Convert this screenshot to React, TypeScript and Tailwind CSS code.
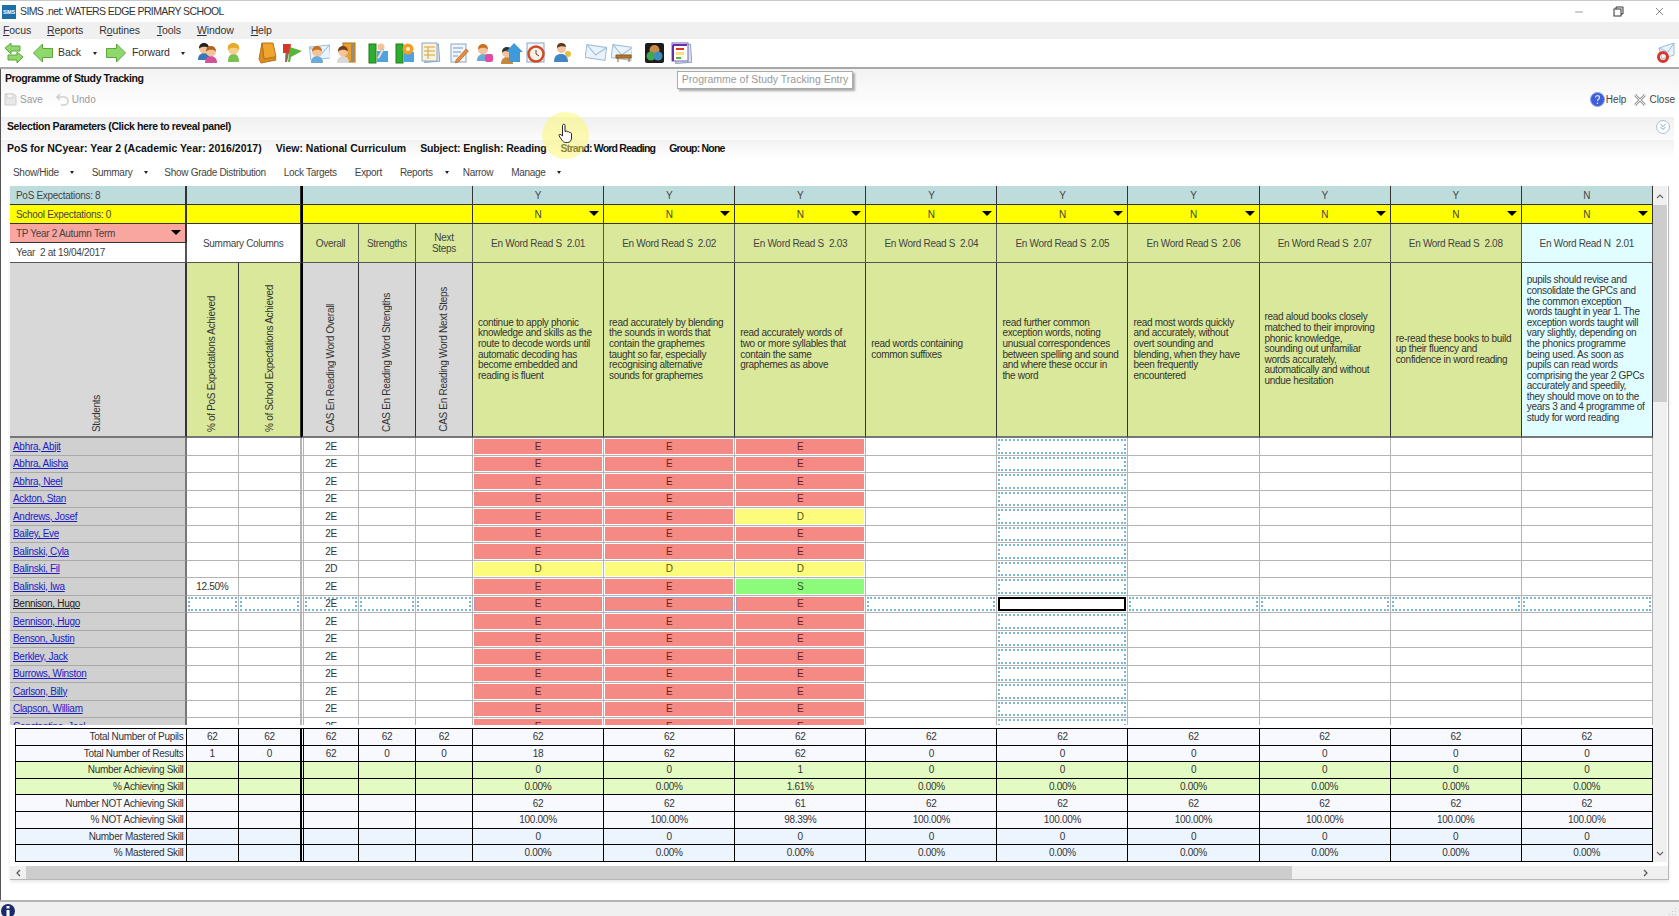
import { ChevronsDown, Minus, X } from 'lucide-react';

const gridCols = 'grid grid-cols-[176.5px_52.5px_62px_58px_57px_57px_repeat(9,131.1px)]';
const totalCols = 'grid grid-cols-[171.5px_52.5px_62px_58px_57px_57px_repeat(9,131.1px)]';

const skills = [
  { code: 'En Word Read S  2.01', pos: 'Y', text: 'continue to apply phonic\nknowledge and skills as the\nroute to decode words until\nautomatic decoding has\nbecome embedded and\nreading is fluent' },
  { code: 'En Word Read S  2.02', pos: 'Y', text: 'read accurately by blending\nthe sounds in words that\ncontain the graphemes\ntaught so far, especially\nrecognising alternative\nsounds for graphemes' },
  { code: 'En Word Read S  2.03', pos: 'Y', text: 'read accurately words of\ntwo or more syllables that\ncontain the same\ngraphemes as above' },
  { code: 'En Word Read S  2.04', pos: 'Y', text: 'read words containing\ncommon suffixes' },
  { code: 'En Word Read S  2.05', pos: 'Y', text: 'read further common\nexception words, noting\nunusual correspondences\nbetween spelling and sound\nand where these occur in\nthe word' },
  { code: 'En Word Read S  2.06', pos: 'Y', text: 'read most words quickly\nand accurately, without\novert sounding and\nblending, when they have\nbeen frequently\nencountered' },
  { code: 'En Word Read S  2.07', pos: 'Y', text: 'read aloud books closely\nmatched to their improving\nphonic knowledge,\nsounding out unfamiliar\nwords accurately,\nautomatically and without\nundue hesitation' },
  { code: 'En Word Read S  2.08', pos: 'Y', text: 're-read these books to build\nup their fluency and\nconfidence in word reading' },
  { code: 'En Word Read N  2.01', pos: 'N', text: 'pupils should revise and\nconsolidate the GPCs and\nthe common exception\nwords taught in year 1. The\nexception words taught will\nvary slightly, depending on\nthe phonics programme\nbeing used. As soon as\npupils can read words\ncomprising the year 2 GPCs\naccurately and speedily,\nthey should move on to the\nyears 3 and 4 programme of\nstudy for word reading' },
];

const students = [
  { name: 'Abhra, Abjit', grades: ['E', 'E', 'E'] },
  { name: 'Abhra, Alisha', grades: ['E', 'E', 'E'] },
  { name: 'Abhra, Neel', grades: ['E', 'E', 'E'] },
  { name: 'Ackton, Stan', grades: ['E', 'E', 'E'] },
  { name: 'Andrews, Josef', grades: ['E', 'E', 'D'] },
  { name: 'Bailey, Eve', grades: ['E', 'E', 'E'] },
  { name: 'Balinski, Cyla', grades: ['E', 'E', 'E'] },
  { name: 'Balinski, Fil', grades: ['D', 'D', 'D'], overall: '2D' },
  { name: 'Balinski, Iwa', grades: ['E', 'E', 'S'], pct: '12.50%' },
  { name: 'Bennison, Hugo', grades: ['E', 'E', 'E'], selected: true },
  { name: 'Bennison, Hugo', grades: ['E', 'E', 'E'] },
  { name: 'Benson, Justin', grades: ['E', 'E', 'E'] },
  { name: 'Berkley, Jack', grades: ['E', 'E', 'E'] },
  { name: 'Burrows, Winston', grades: ['E', 'E', 'E'] },
  { name: 'Carlson, Billy', grades: ['E', 'E', 'E'] },
  { name: 'Clapson, William', grades: ['E', 'E', 'E'] },
  { name: 'Constantine, Joel', grades: ['E', 'E', 'E'] },
];

const gradeClass: Record<string, string> = {
  E: 'bg-[#f58a85] text-[#6b1f1f]',
  D: 'bg-[#fdfb7c] text-[#55550f]',
  S: 'bg-[#8cfb7c] text-[#1f5a1f]',
};

const totals = [
  { label: 'Total Number of Pupils', bg: 'bg-[#f8f9ff]', first: ['62', '62', '62', '62', '62'], vals: ['62', '62', '62', '62', '62', '62', '62', '62', '62'] },
  { label: 'Total Number of Results', bg: 'bg-[#f8f9ff]', first: ['1', '0', '62', '0', '0'], vals: ['18', '62', '62', '0', '0', '0', '0', '0', '0'] },
  { label: 'Number Achieving Skill', bg: 'bg-[#e3fbc2]', first: ['', '', '', '', ''], vals: ['0', '0', '1', '0', '0', '0', '0', '0', '0'] },
  { label: '% Achieving Skill', bg: 'bg-[#e3fbc2]', first: ['', '', '', '', ''], vals: ['0.00%', '0.00%', '1.61%', '0.00%', '0.00%', '0.00%', '0.00%', '0.00%', '0.00%'] },
  { label: 'Number NOT Achieving Skill', bg: 'bg-[#f8f9ff]', first: ['', '', '', '', ''], vals: ['62', '62', '61', '62', '62', '62', '62', '62', '62'] },
  { label: '% NOT Achieving Skill', bg: 'bg-[#f8f9ff]', first: ['', '', '', '', ''], vals: ['100.00%', '100.00%', '98.39%', '100.00%', '100.00%', '100.00%', '100.00%', '100.00%', '100.00%'] },
  { label: 'Number Mastered Skill', bg: 'bg-[#ecf5fd]', first: ['', '', '', '', ''], vals: ['0', '0', '0', '0', '0', '0', '0', '0', '0'] },
  { label: '% Mastered Skill', bg: 'bg-[#ecf5fd]', first: ['', '', '', '', ''], vals: ['0.00%', '0.00%', '0.00%', '0.00%', '0.00%', '0.00%', '0.00%', '0.00%', '0.00%'] },
];

function Caret() {
  return <span className="inline-block w-0 h-0 border-x-[2.5px] border-x-transparent border-t-[3px] border-t-[#222]" />;
}

function DropTriangle() {
  return <span className="absolute right-[4px] top-[6px] w-0 h-0 border-x-[5px] border-x-transparent border-t-[5px] border-t-black" />;
}

function Bust({ x, y, hair, body }: { x: number; y: number; hair: string; body: string }) {
  return (
    <g transform={`translate(${x} ${y})`}>
      <path d="M1 18c0-5 3-7 6-7s6 2 6 7z" fill={body} />
      <circle cx="7" cy="6.5" r="5" fill="#f3c39a" />
      <path d="M2 6.5C2 2.5 4.500 1 7 1s5 1.500 5 5.500C10 4.500 5 4 2 6.500z" fill={hair} />
    </g>
  );
}

function Sheet({ x = 3, y = 2, w = 15, h = 18, rot = 0 }: { x?: number; y?: number; w?: number; h?: number; rot?: number }) {
  return <rect x={x} y={y} width={w} height={h} fill="#f1f6fb" stroke="#8aa6bf" transform={`rotate(${rot} 10 10)`} />;
}

function Envelope({ rot = -6 }: { rot?: number }) {
  return (
    <g transform={`rotate(${rot} 11 10)`}>
      <rect x="1" y="4" width="20" height="13" fill="#e8f3fb" stroke="#9fbdd4" />
      <path d="M1 4l10 9 10-9" fill="none" stroke="#9fbdd4" />
    </g>
  );
}

function ToolIcon({ w, className = '', children }: { w: number; className?: string; children: React.ReactNode }) {
  return (
    <svg width={w} height="22" viewBox={`0 0 ${w} 22`} className={`shrink-0 ${className}`}>
      {children}
    </svg>
  );
}

function Toolbar() {
  return (
    <div className="h-[30px] shrink-0 bg-white border-b-2 border-[#a8a8a8] flex items-center">
      <ToolIcon w={18} className="ml-[5px]">
        <path d="M0 6l6-5v3h9v5H6v3z" fill="#8fd86b" stroke="#5ca63a" />
        <path d="M18 15l-6-5v3H3v5h9v3z" fill="#8fd86b" stroke="#5ca63a" />
      </ToolIcon>
      <ToolIcon w={20} className="ml-[10px]">
        <path d="M.5 11l9-9v4.500h10v9h-10V20z" fill="#8fd86b" stroke="#5ca63a" />
      </ToolIcon>
      <span className="ml-[5px] w-[35px] text-[10.5px] tracking-[-0.1px] text-[#333]">Back</span>
      <Caret />
      <ToolIcon w={20} className="ml-[9px]">
        <path d="M19.500 11l-9-9v4.500H.5v9h10V20z" fill="#8fd86b" stroke="#5ca63a" />
      </ToolIcon>
      <span className="ml-[6px] w-[49px] text-[10.5px] tracking-[-0.1px] text-[#333]">Forward</span>
      <Caret />
      <ToolIcon w={21} className="ml-[12px]">
        <Bust x={0} y={0} hair="#222" body="#3a78b5" />
        <Bust x={7} y={3} hair="#b8641f" body="#d84f9c" />
      </ToolIcon>
      <ToolIcon w={15} className="ml-[8px]">
        <path d="M2 20c0-6 2-8 5.500-8s5.500 2 5.500 8z" fill="#79c24f" />
        <circle cx="7.500" cy="7" r="5.500" fill="#f6cf8d" />
        <path d="M2 8C1 3 4 1 7.500 1S14 3 13 8c-1-3-9-3-11 0z" fill="#e6a928" />
      </ToolIcon>
      <ToolIcon w={20} className="ml-[16px]">
        <path d="M5 1h11l3 14-12 2z" fill="#f0a62e" stroke="#b8741a" />
        <path d="M5 1L2 17l2 4 15-3-1-3-11 2z" fill="#dd8a1e" stroke="#b8741a" />
      </ToolIcon>
      <ToolIcon w={21} className="ml-[5px]">
        <path d="M4 2L3 20h2l2-9z" fill="#8a6a50" />
        <path d="M1 2h8l-1 9H1z" fill="#d8352b" />
        <path d="M8 5l12 4-11 6-1 5H6z" fill="#59b53a" />
      </ToolIcon>
      <ToolIcon w={21} className="ml-[6px]">
        <Envelope />
        <Bust x={1} y={3} hair="#c9701e" body="#6aaad8" />
      </ToolIcon>
      <ToolIcon w={21} className="ml-[5px]">
        <rect x="8" y="1" width="12" height="19" fill="#e5a030" stroke="#a8701a" />
        <rect x="16" y="2" width="3" height="17" fill="#8a8f96" />
        <Bust x={1} y={3} hair="#7a3b16" body="#d9d9d9" />
      </ToolIcon>
      <ToolIcon w={21} className="ml-[12px]">
        <rect x="1" y="2" width="7" height="19" fill="#2fae2d" stroke="#1c7c1c" />
        <rect x="9" y="9" width="11" height="11" fill="#4da3e0" />
        <circle cx="13" cy="5" r="3.500" fill="#f3c39a" />
        <path d="M9 16l5-9 2 1-5 9z" fill="#e9e9e9" stroke="#999" strokeWidth=".5" />
      </ToolIcon>
      <ToolIcon w={20} className="ml-[6px]">
        <rect x="1" y="2" width="7" height="19" fill="#2fae2d" stroke="#1c7c1c" />
        <rect x="9" y="10" width="10" height="10" fill="#4da3e0" />
        <circle cx="13" cy="7" r="5.500" fill="#f0a028" />
        <circle cx="13" cy="7" r="2" fill="#fff2c8" />
      </ToolIcon>
      <ToolIcon w={21} className="ml-[5px]">
        <rect x="4" y="3" width="15" height="17" fill="#d8e6f1" stroke="#8aa6bf" transform="rotate(-4 10 10)" />
        <rect x="2" y="1" width="15" height="18" fill="#f7f3dd" stroke="#8aa6bf" />
        <path d="M4 5h11M4 9h11M4 13h11M8 5v12" stroke="#d9a23a" strokeWidth="1" />
      </ToolIcon>
      <ToolIcon w={21} className="ml-[7px]">
        <Sheet />
        <path d="M5 6h10M5 10h8M5 14h5" stroke="#6a9bd0" />
        <path d="M8 18l10-11 2.500 2-10 11-3 1z" fill="#e98a3c" stroke="#a55a1e" strokeWidth=".6" />
      </ToolIcon>
      <ToolIcon w={19} className="ml-[6px]">
        <Bust x={1} y={1} hair="#c9701e" body="#6aaad8" />
        <rect x="10" y="12" width="8" height="8" rx="2" fill="#e548a5" />
      </ToolIcon>
      <ToolIcon w={24} className="ml-[6px]">
        <Bust x={0} y={4} hair="#333" body="#c6863c" />
        <path d="M14 1l9 9h-3v10H9V10H6z" fill="#3c9bd8" />
      </ToolIcon>
      <ToolIcon w={22} className="ml-px">
        <Sheet x={2} y={1} w={17} h={19} />
        <circle cx="11" cy="12" r="7.500" fill="#f7f2e8" stroke="#cf4a26" strokeWidth="2.500" />
        <path d="M11 8v4l3 2" fill="none" stroke="#7a3a20" />
      </ToolIcon>
      <ToolIcon w={18} className="ml-[7px]">
        <path d="M0 20c0-6 3-8 7-8s7 2 7 8z" fill="#3f86c6" />
        <circle cx="7.500" cy="6.500" r="4.500" fill="#f3c39a" />
        <path d="M3 6c0-4 2-5 4.500-5S12 2 12 5C9 4 6 4 3 6z" fill="#5a3a22" />
        <circle cx="14" cy="12" r="3" fill="#e6c23a" />
      </ToolIcon>
      <ToolIcon w={22} className="ml-[13px]">
        <Envelope rot={8} />
      </ToolIcon>
      <ToolIcon w={21} className="ml-[4px]">
        <Envelope rot={8} />
        <path d="M5 13h15v3H5zM7 16v4M18 16v4" fill="#b5782a" stroke="#8a5a1e" />
      </ToolIcon>
      <ToolIcon w={19} className="ml-[13px]">
        <rect x="0" y="1" width="19" height="20" rx="2" fill="#1c1c1c" />
        <circle cx="9.500" cy="8" r="5" fill="#c98a4a" />
        <circle cx="6" cy="14" r="4.500" fill="#3fa84a" />
        <circle cx="13" cy="14" r="4.500" fill="#3f8dc0" />
      </ToolIcon>
      <ToolIcon w={21} className="ml-[7px]">
        <rect x="4" y="3" width="16" height="18" fill="#d8e6f1" stroke="#8aa6bf" transform="rotate(-4 10 10)" />
        <rect x="1" y="1" width="16" height="18" fill="#fff" stroke="#7b5fb5" />
        <path d="M2 3h14M2 19V3" stroke="#6a2ea8" strokeWidth="2" />
        <rect x="5" y="6" width="8" height="2" fill="#d8352b" />
        <rect x="5" y="10" width="8" height="3" fill="#f4e27a" />
        <rect x="5" y="15" width="5" height="2" fill="#59b53a" />
      </ToolIcon>
      <ToolIcon w={19} className="ml-auto mr-[4px]">
        <path d="M3 6l15-5v12L6 17z" fill="#e8f3fb" stroke="#9fbdd4" />
        <path d="M3 6l9 4 6-9" fill="none" stroke="#9fbdd4" />
        <circle cx="7" cy="15" r="4.500" fill="none" stroke="#d8352b" strokeWidth="3" />
      </ToolIcon>
    </div>
  );
}

function Rotated({ children }: { children: React.ReactNode }) {
  return <span className="[writing-mode:vertical-rl] rotate-180 whitespace-nowrap leading-none text-[#333]">{children}</span>;
}

function GridHeader() {
  const line = 'border-r border-b border-[#333]';
  return (
    <div className={`${gridCols} grid-rows-[19px_19px_19px_20px_175px] text-[10px] tracking-[-0.3px] text-[#444]`}>
      <div className={`${line} border-r-2 bg-[#bfdcdc] pl-[6px] flex items-center`}>PoS Expectations: 8</div>
      <div className={`${line} col-span-2 bg-[#bfdcdc]`} />
      <div className={`${line} col-span-3 border-l-2 border-l-black bg-[#bfdcdc]`} />
      {skills.map((s, i) => (
        <div key={i} className={`${line} bg-[#bfdcdc] flex items-center justify-center`}>{s.pos}</div>
      ))}

      <div className={`${line} border-r-2 bg-[#ffff00] pl-[6px] flex items-center`}>School Expectations: 0</div>
      <div className={`${line} col-span-2 bg-[#ffff00]`} />
      <div className={`${line} col-span-3 border-l-2 border-l-black bg-[#ffff00]`} />
      {skills.map((_, i) => (
        <div key={i} className={`${line} relative bg-[#ffff00] flex items-center justify-center`}>
          N
          <DropTriangle />
        </div>
      ))}

      <div className={`${line} border-r-2 relative bg-[#f9a5a0] pl-[6px] flex items-center`}>
        TP Year 2 Autumn Term
        <DropTriangle />
      </div>
      <div className="col-span-2 row-span-2 border-b border-r border-[#555] bg-white flex items-center justify-center">Summary Columns</div>
      <div className="row-span-2 border-b border-r border-l-2 border-[#555] border-l-black bg-[#d9e89a] flex items-center justify-center">Overall</div>
      <div className="row-span-2 border-b border-r border-[#555] bg-[#d9e89a] flex items-center justify-center">Strengths</div>
      <div className="row-span-2 border-b border-r border-[#555] bg-[#d9e89a] flex items-center justify-center text-center leading-[11px]">Next<br />Steps</div>
      {skills.map((s, i) => (
        <div key={i} className={`row-span-2 border-b border-r border-[#555] flex items-center justify-center whitespace-pre ${i === 8 ? 'bg-[#e0fdff]' : 'bg-[#d9e89a]'}`}>
          {s.code}
        </div>
      ))}
      <div className="border-b border-r-2 border-[#555] bg-white pl-[6px] flex items-center whitespace-pre">Year  2 at 19/04/2017</div>

      <div className="border-r-2 border-[#333] border-b-2 border-b-[#777] bg-[#d8d8d8] flex items-end justify-center pb-[4px]"><Rotated>Students</Rotated></div>
      <div className="border-r border-[#333] border-b-2 border-b-[#777] bg-[#d9e89a] flex items-end justify-center pb-[4px]"><Rotated>% of PoS Expectations Achieved</Rotated></div>
      <div className="border-r border-[#333] border-b-2 border-b-[#777] bg-[#d9e89a] flex items-end justify-center pb-[4px]"><Rotated>% of School Expectations Achieved</Rotated></div>
      <div className="border-r border-l-2 border-[#333] border-l-black border-b-2 border-b-[#777] bg-[#d8d8d8] flex items-end justify-center pb-[4px]"><Rotated>CAS En Reading Word Overall</Rotated></div>
      <div className="border-r border-[#333] border-b-2 border-b-[#777] bg-[#d8d8d8] flex items-end justify-center pb-[4px]"><Rotated>CAS En Reading Word Strengths</Rotated></div>
      <div className="border-r border-[#333] border-b-2 border-b-[#777] bg-[#d8d8d8] flex items-end justify-center pb-[4px]"><Rotated>CAS En Reading Word Next Steps</Rotated></div>
      {skills.map((s, i) => (
        <div key={i} className={`border-r border-[#333] border-b-2 border-b-[#777] flex items-center pl-[5px] whitespace-pre leading-[10.6px] text-[#333] ${i === 8 ? 'bg-[#e0fdff]' : 'bg-[#d9e89a]'}`}>
          {s.text}
        </div>
      ))}
    </div>
  );
}

function StudentRow({ student }: { student: (typeof students)[number] }) {
  const cell = 'h-[17.5px] border-r border-b border-[#b4b4b4] bg-white p-px';
  const dotted = 'h-full border-2 border-dotted border-[#7ab7d0] flex items-center justify-center';
  const sel = student.selected;
  return (
    <div className={`${gridCols} text-[10px] tracking-[-0.3px] text-[#333]`}>
      <div className="h-[17.5px] border-r-2 border-r-[#777] border-b border-b-[#a8a8a8] bg-[#d0d0d0] pl-[3px] flex items-center">
        <span className={`underline ${sel ? 'text-[#222]' : 'text-[#1c1cc8]'}`}>{student.name}</span>
      </div>
      <div className={`${cell} flex items-center justify-center`}>
        {sel ? <div className={`${dotted} w-full`} /> : student.pct}
      </div>
      <div className={cell}>{sel && <div className={dotted} />}</div>
      <div className={`${cell} border-l-[3px] border-double flex items-center justify-center`}>
        {sel ? <div className={`${dotted} w-full`}>2E</div> : student.overall ?? '2E'}
      </div>
      <div className={cell}>{sel && <div className={dotted} />}</div>
      <div className={cell}>{sel && <div className={dotted} />}</div>
      {skills.map((_, i) => {
        const grade = student.grades[i];
        if (grade) {
          return (
            <div key={i} className={cell}>
              <div className={`h-full flex items-center justify-center ${gradeClass[grade]} ${sel ? 'border border-dotted border-[#8a9ad8]' : ''}`}>{grade}</div>
            </div>
          );
        }
        if (i === 4) {
          return (
            <div key={i} className={cell}>
              <div className={sel ? 'h-full border-2 border-black' : 'h-full border-2 border-dotted border-[#7ab7d0]'} />
            </div>
          );
        }
        return <div key={i} className={cell}>{sel && <div className={dotted} />}</div>;
      })}
    </div>
  );
}

function TotalsTable() {
  return (
    <div className="ml-[5px] mt-[3px] border-t border-black text-[10px] tracking-[-0.3px] text-[#333]">
      {totals.map((row) => (
        <div key={row.label} className={`${totalCols} h-[16.6px] ${row.bg}`}>
          <div className="border-l border-r border-b border-black pr-[2px] flex items-center justify-end">{row.label}</div>
          {row.first.map((v, i) => (
            <div key={i} className={`border-r border-b border-black flex items-center justify-center ${i === 2 ? 'border-l-[3px] border-double' : ''}`}>{v}</div>
          ))}
          {row.vals.map((v, i) => (
            <div key={i} className="border-r border-b border-black flex items-center justify-center">{v}</div>
          ))}
        </div>
      ))}
    </div>
  );
}

function VerticalScrollbar() {
  return (
    <div className="w-[14px] bg-[#f0f0f0] flex flex-col items-center text-[#666]">
      <div className="h-[19px] flex items-center justify-center">
        <svg width="8" height="6" viewBox="0 0 8 6"><path d="M1 5l3-3 3 3" fill="none" stroke="#666" strokeWidth="1.200" /></svg>
      </div>
      <div className="h-[197px] w-full bg-[#cdcdcd]" />
      <div className="flex-1" />
      <div className="h-[17px] flex items-center justify-center">
        <svg width="8" height="6" viewBox="0 0 8 6"><path d="M1 1l3 3 3-3" fill="none" stroke="#666" strokeWidth="1.200" /></svg>
      </div>
    </div>
  );
}

function HorizontalScrollbar() {
  return (
    <div className="mt-[4px] h-[13px] bg-[#f0f0f0] flex items-center">
      <div className="w-[16px] flex items-center justify-center">
        <svg width="6" height="8" viewBox="0 0 6 8"><path d="M5 1L2 4l3 3" fill="none" stroke="#555" strokeWidth="1.200" /></svg>
      </div>
      <div className="h-full w-[1266px] bg-[#cdcdcd]" />
      <div className="flex-1" />
      <div className="w-[25px] flex items-center">
        <svg width="6" height="8" viewBox="0 0 6 8"><path d="M1 1l3 3-3 3" fill="none" stroke="#555" strokeWidth="1.200" /></svg>
      </div>
    </div>
  );
}

export default function App() {
  return (
    <div className="relative w-[1679px] h-[916px] overflow-hidden bg-white flex flex-col font-['Liberation_Sans',sans-serif]">
      {/* title bar */}
      <div className="h-[22px] border-t border-[#c8c8c8] bg-white flex items-center shrink-0">
        <div className="ml-[2px] w-[14px] h-[14px] bg-[#1e6fa5] text-white text-[5px] font-bold leading-[14px] text-center overflow-hidden">SIMS</div>
        <span className="ml-[4px] text-[10.5px] tracking-[-0.6px] text-[#333]">SIMS .net: WATERS EDGE PRIMARY SCHOOL</span>
        <Minus size={12} strokeWidth={1} className="ml-auto text-[#333]" />
        <svg width="11" height="11" viewBox="0 0 11 11" className="ml-[28px]">
          <rect x="1" y="3" width="7" height="7" fill="none" stroke="#333" />
          <path d="M3 3V1h7v7H8" fill="none" stroke="#333" />
        </svg>
        <X size={13} strokeWidth={1.100} className="ml-[29px] mr-[13px] text-[#333]" />
      </div>

      {/* menu */}
      <div className="h-[17px] shrink-0 bg-[#f0f0f0] text-[10.5px] tracking-[-0.1px] text-[#333] flex items-center">
        <span className="ml-[3px]"><u>F</u>ocus</span>
        <span className="ml-[16px]"><u>R</u>eports</span>
        <span className="ml-[16px]">R<u>o</u>utines</span>
        <span className="ml-[17px]"><u>T</u>ools</span>
        <span className="ml-[16px]"><u>W</u>indow</span>
        <span className="ml-[17px]"><u>H</u>elp</span>
      </div>

      <Toolbar />

      <div className="flex-1 min-h-0 border-l border-[#555] bg-[linear-gradient(#f3f3f3,#ffffff_40px)] flex flex-col">
        <div className="h-[21px] pl-[4px] flex items-end text-[10.5px] tracking-[-0.4px] font-bold text-[#111] pb-[3px]">Programme of Study Tracking</div>

        <div className="h-[27px] flex items-center text-[10px] text-[#999] pb-[8px]">
          <svg width="13" height="13" viewBox="0 0 13 13" className="ml-[3px]">
            <path d="M1 1h9l2 2v9H1z" fill="#e8e8e8" stroke="#cfcfcf" />
            <rect x="3" y="1" width="6" height="4" fill="#f6f6f6" stroke="#cfcfcf" />
          </svg>
          <span className="ml-[3px]">Save</span>
          <svg width="13" height="13" viewBox="0 0 13 13" className="ml-[13px]">
            <path d="M4 1L1 4l3 3M1 4h7a4 4 0 0 1 0 8H5" fill="none" stroke="#cfcfcf" strokeWidth="1.600" />
          </svg>
          <span className="ml-[3px]">Undo</span>
          <svg width="15" height="15" viewBox="0 0 15 15" className="ml-auto">
            <circle cx="7.500" cy="7.500" r="7" fill="#3f5fd8" stroke="#8aa6e8" />
            <path d="M5.500 5.500c0-2.500 4-2.500 4 0 0 1.500-2 1.500-2 3.500M7.500 10.500v1.500" fill="none" stroke="#dfe6ff" strokeWidth="1.200" />
          </svg>
          <span className="ml-px text-[#444]">Help</span>
          <svg width="14" height="14" viewBox="0 0 14 14" className="ml-[7px]">
            <path d="M2 2l10 10M12 2L2 12" stroke="#9a9a9a" strokeWidth="2.600" />
            <path d="M2 2l10 10M12 2L2 12" stroke="#eeeeee" strokeWidth="1" />
          </svg>
          <span className="ml-[2px] mr-[4px] text-[#444]">Close</span>
        </div>

        <div className="h-[23px] mr-[5px] pl-[6px] pb-[3px] bg-[linear-gradient(#f0f0f0,#fbfbfb)] flex items-center text-[10.5px] tracking-[-0.4px] font-bold text-[#111]">
          Selection Parameters (Click here to reveal panel)
          <div className="ml-auto mr-[4px] w-[14px] h-[14px] rounded-full border border-[#aebfcc] bg-white flex items-center justify-center">
            <ChevronsDown size={10} strokeWidth={2} className="text-[#4a8fc0]" />
          </div>
        </div>

        <div className="h-[18px] mr-[5px] pl-[6px] bg-[linear-gradient(#f2f2f2,#ffffff)] flex items-center gap-[14px] text-[10.5px] font-bold text-[#111]">
          <span>PoS for NCyear: Year 2 (Academic Year: 2016/2017)</span>
          <span>View: National Curriculum</span>
          <span className="tracking-[-0.15px]">Subject: English: Reading</span>
          <span className="tracking-[-0.8px]">Strand: Word Reading</span>
          <span className="tracking-[-0.8px]">Group: None</span>
        </div>

        <div className="h-[28px] flex items-center text-[10px] tracking-[-0.3px] text-[#444] pl-[12px]">
          <span>Show/Hide</span>
          <span className="ml-[11px] flex"><Caret /></span>
          <span className="ml-[18px]">Summary</span>
          <span className="ml-[12px] flex"><Caret /></span>
          <span className="ml-[16px]">Show Grade Distribution</span>
          <span className="ml-[18px]">Lock Targets</span>
          <span className="ml-[18px]">Export</span>
          <span className="ml-[18px]">Reports</span>
          <span className="ml-[12px] flex"><Caret /></span>
          <span className="ml-[14px]">Narrow</span>
          <span className="ml-[18px]">Manage</span>
          <span className="ml-[11px] flex"><Caret /></span>
        </div>

        {/* tracking grid */}
        <div className="ml-[9px] w-[1659px] h-[694px] border-r border-b border-[#b8b8b8] shadow-[0_2px_3px_#e8e8e8] flex flex-col">
          <div className="h-[676px] flex">
            <div className="w-[1643px] flex flex-col">
              <GridHeader />
              <div className="h-[287px] overflow-hidden">
                {students.map((s, i) => (
                  <StudentRow key={i} student={s} />
                ))}
              </div>
              <TotalsTable />
            </div>
            <VerticalScrollbar />
          </div>
          <HorizontalScrollbar />
        </div>
      </div>

      {/* status bar */}
      <div className="h-[16px] shrink-0 border-t-2 border-[#b4b4b4] bg-[#f0f0f0] flex overflow-hidden">
        <svg width="14" height="14" viewBox="0 0 14 14" className="ml-px mt-[2px] shrink-0">
          <circle cx="7" cy="7" r="7" fill="#1a2a6c" />
          <rect x="5.500" y="2" width="3" height="2.500" fill="#fff" />
          <rect x="5.500" y="6" width="3" height="7" fill="#fff" />
        </svg>
        <svg width="8" height="8" viewBox="0 0 8 8" className="ml-auto mr-[2px] mt-[5px] shrink-0">
          <path d="M6 1h1v1H6zM6 4h1v1H6zM3 4h1v1H3zM6 7h1v1H6zM3 7h1v1H3zM0 7h1v1H0z" fill="#c4c4c4" />
        </svg>
      </div>

      {/* tooltip */}
      <div className="absolute left-[677px] top-[71px] w-[176px] h-[18px] bg-white border border-[#aaa] shadow-[2px_2px_2px_#aaa] text-[10.5px] text-[#999] flex items-center justify-center">
        Programme of Study Tracking Entry
      </div>

      {/* recorded mouse highlight */}
      <div className="absolute left-[542px] top-[112px] w-[47px] h-[47px] rounded-full bg-[#fbf86a]/50" />
      <svg width="16" height="21" viewBox="0 0 16 21" className="absolute left-[558px] top-[123px]">
        <path d="M5 1.500c1-.8 2 0 2 1v6l1-.3c1-.3 1.500 0 1.500.6 1-.3 2 0 2 .8 1-.3 2 .2 2 1v4.400c0 2.500-1.500 4.500-4 4.500H7.500c-1.500 0-2.500-.8-3.500-2.300L1.200 13c-.7-1 .5-2.300 1.800-1.300l1.500 1.300V2.500c0-.4.200-.8.500-1z" fill="#fff" stroke="#111" strokeWidth=".9" />
      </svg>
    </div>
  );
}
